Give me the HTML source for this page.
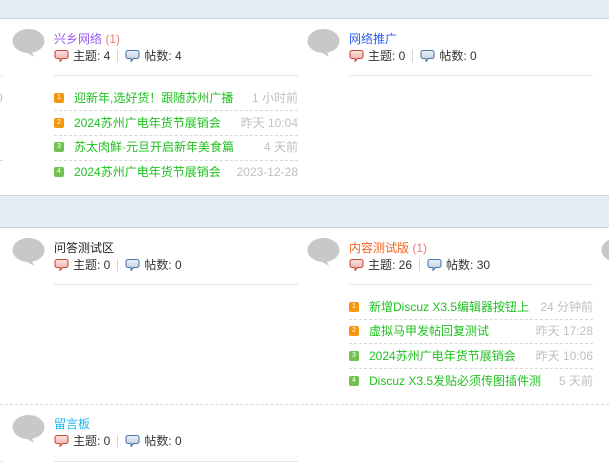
<!DOCTYPE html>
<html><head><meta charset="utf-8"><style>
*{margin:0;padding:0;box-sizing:border-box}
body{width:609px;height:476px;overflow:hidden;background:#fff;font-family:"Liberation Sans","Noto Sans CJK SC",sans-serif;font-size:12px;color:#333;position:relative}
.a{position:absolute;white-space:nowrap}
.band{position:absolute;left:0;width:609px;background:#e5ecf3}
.bub{position:absolute;width:34px;height:28px}
.t{font-size:12px;line-height:14px}
.st{font-size:12px;line-height:14px;color:#333;display:flex;align-items:center}
.st svg{margin-right:4px}
.sep{display:inline-block;width:1px;height:12px;background:#c8d6e3;margin:0 7px}
.hl{position:absolute;height:1px;background:#e3e3e3}
.dl{position:absolute;height:0;border-top:1px dashed #d8d8d8}
.row{position:absolute;height:14px;line-height:14px;font-size:12px;display:flex;align-items:center;white-space:nowrap}
.row .g{color:#1ec11e}
.row .tm{position:absolute;right:0;top:0;color:#c0c0c0}
.bd{display:inline-block;flex:none;width:10px;height:10px;border-radius:2px;color:#fff;font-size:7px;line-height:10px;text-align:center;margin-right:10px}
.o{background:#f5960f}.gr{background:#72c252}
</style></head><body>
<div class="band" style="top:0;height:19px;border-bottom:1px solid #c8d6e3"></div>
<div class="band" style="top:195px;height:33px;border-top:1px solid #c8d6e3;border-bottom:1px solid #c8d6e3"></div>

<svg width="0" height="0" style="position:absolute"><defs>
<symbol id="bb" viewBox="0 0 34 28"><ellipse cx="16.5" cy="12" rx="16" ry="12" fill="#c8c8c8"/><path d="M19 21 L22 28 L12 22Z" fill="#c8c8c8"/></symbol>
<linearGradient id="rg" x1="0" y1="0" x2="0" y2="1"><stop offset="0" stop-color="#fbe6e3"/><stop offset="1" stop-color="#e8a7a0"/></linearGradient>
<linearGradient id="bg" x1="0" y1="0" x2="0" y2="1"><stop offset="0" stop-color="#eef2f7"/><stop offset="1" stop-color="#b9c8da"/></linearGradient>
<symbol id="ri" viewBox="0 0 15 14"><path d="M3 1.5h9a2 2 0 0 1 2 2v4a2 2 0 0 1-2 2h-3.5l-2.5 3v-3h-3a2 2 0 0 1-2-2v-4a2 2 0 0 1 2-2z" fill="url(#rg)" stroke="#c84a3a" stroke-width="1.1" stroke-linejoin="round"/></symbol>
<symbol id="bi" viewBox="0 0 15 14"><path d="M3 1.5h9a2 2 0 0 1 2 2v4a2 2 0 0 1-2 2h-3.5l-2.5 3v-3h-3a2 2 0 0 1-2-2v-4a2 2 0 0 1 2-2z" fill="url(#bg)" stroke="#4a76a8" stroke-width="1.1" stroke-linejoin="round"/></symbol>
</defs></svg>

<!-- section 1 left -->
<svg class="bub" style="left:12px;top:29px"><use href="#bb"/></svg>
<div class="a t" style="left:54px;top:32px"><span style="color:#9a5cf0">兴乡网络</span> <span style="color:#f07a7a">(1)</span></div>
<div class="a st" style="left:54px;top:49px"><svg width="15" height="14"><use href="#ri"/></svg>主题: 4<span class="sep"></span><svg width="15" height="14"><use href="#bi"/></svg>帖数: 4</div>
<div class="hl" style="left:54px;top:75px;width:244px"></div>
<div class="hl" style="left:0;top:75px;width:3px"></div>
<div class="a" style="left:-4px;top:91px;color:#c0c0c0">0</div>
<div class="row" style="left:54px;top:91px;width:244px"><span class="bd o">1</span><span class="g">迎新年,选好货！跟随苏州广播</span><span class="tm">1 小时前</span></div>
<div class="dl" style="left:54px;top:110px;width:244px"></div>
<div class="row" style="left:54px;top:116px;width:244px"><span class="bd o">2</span><span class="g">2024苏州广电年货节展销会</span><span class="tm">昨天 10:04</span></div>
<div class="dl" style="left:54px;top:135px;width:244px"></div>
<div class="row" style="left:54px;top:140px;width:244px"><span class="bd gr">3</span><span class="g">苏太肉鲜·元旦开启新年美食篇</span><span class="tm">4 天前</span></div>
<div class="dl" style="left:54px;top:160px;width:244px"></div>
<div class="row" style="left:54px;top:165px;width:244px"><span class="bd gr">4</span><span class="g">2024苏州广电年货节展销会</span><span class="tm">2023-12-28</span></div>
<div class="dl" style="left:0;top:160px;width:3px"></div>

<!-- section 1 right -->
<svg class="bub" style="left:307px;top:29px"><use href="#bb"/></svg>
<div class="a t" style="left:349px;top:32px;color:#2f5ff0">网络推广</div>
<div class="a st" style="left:349px;top:49px"><svg width="15" height="14"><use href="#ri"/></svg>主题: 0<span class="sep"></span><svg width="15" height="14"><use href="#bi"/></svg>帖数: 0</div>
<div class="hl" style="left:349px;top:75px;width:244px"></div>

<!-- section 2 left -->
<svg class="bub" style="left:12px;top:238px"><use href="#bb"/></svg>
<div class="a t" style="left:54px;top:241px;color:#222">问答测试区</div>
<div class="a st" style="left:54px;top:258px"><svg width="15" height="14"><use href="#ri"/></svg>主题: 0<span class="sep"></span><svg width="15" height="14"><use href="#bi"/></svg>帖数: 0</div>
<div class="hl" style="left:54px;top:284px;width:244px"></div>

<!-- section 2 right -->
<svg class="bub" style="left:307px;top:238px"><use href="#bb"/></svg>
<svg class="bub" style="left:601px;top:238px"><use href="#bb"/></svg>
<div class="a t" style="left:349px;top:241px"><span style="color:#f5641e">内容测试版</span> <span style="color:#f07a7a">(1)</span></div>
<div class="a st" style="left:349px;top:258px"><svg width="15" height="14"><use href="#ri"/></svg>主题: 26<span class="sep"></span><svg width="15" height="14"><use href="#bi"/></svg>帖数: 30</div>
<div class="hl" style="left:349px;top:284px;width:244px"></div>
<div class="row" style="left:349px;top:300px;width:244px"><span class="bd o">1</span><span class="g">新增Discuz X3.5编辑器按钮上</span><span class="tm">24 分钟前</span></div>
<div class="dl" style="left:349px;top:319px;width:244px"></div>
<div class="row" style="left:349px;top:324px;width:244px"><span class="bd o">2</span><span class="g">虚拟马甲发帖回复测试</span><span class="tm">昨天 17:28</span></div>
<div class="dl" style="left:349px;top:343px;width:244px"></div>
<div class="row" style="left:349px;top:349px;width:244px"><span class="bd gr">3</span><span class="g">2024苏州广电年货节展销会</span><span class="tm">昨天 10:06</span></div>
<div class="dl" style="left:349px;top:368px;width:244px"></div>
<div class="row" style="left:349px;top:374px;width:244px"><span class="bd gr">4</span><span class="g">Discuz X3.5发贴必须传图插件测</span><span class="tm">5 天前</span></div>

<div class="dl" style="left:0;top:404px;width:609px"></div>

<!-- section 3 -->
<svg class="bub" style="left:12px;top:415px"><use href="#bb"/></svg>
<div class="a t" style="left:54px;top:417px;color:#19b5f0">留言板</div>
<div class="a st" style="left:54px;top:434px"><svg width="15" height="14"><use href="#ri"/></svg>主题: 0<span class="sep"></span><svg width="15" height="14"><use href="#bi"/></svg>帖数: 0</div>
<div class="hl" style="left:54px;top:461px;width:244px"></div>
<div class="hl" style="left:0;top:461px;width:3px"></div>
</body></html>
